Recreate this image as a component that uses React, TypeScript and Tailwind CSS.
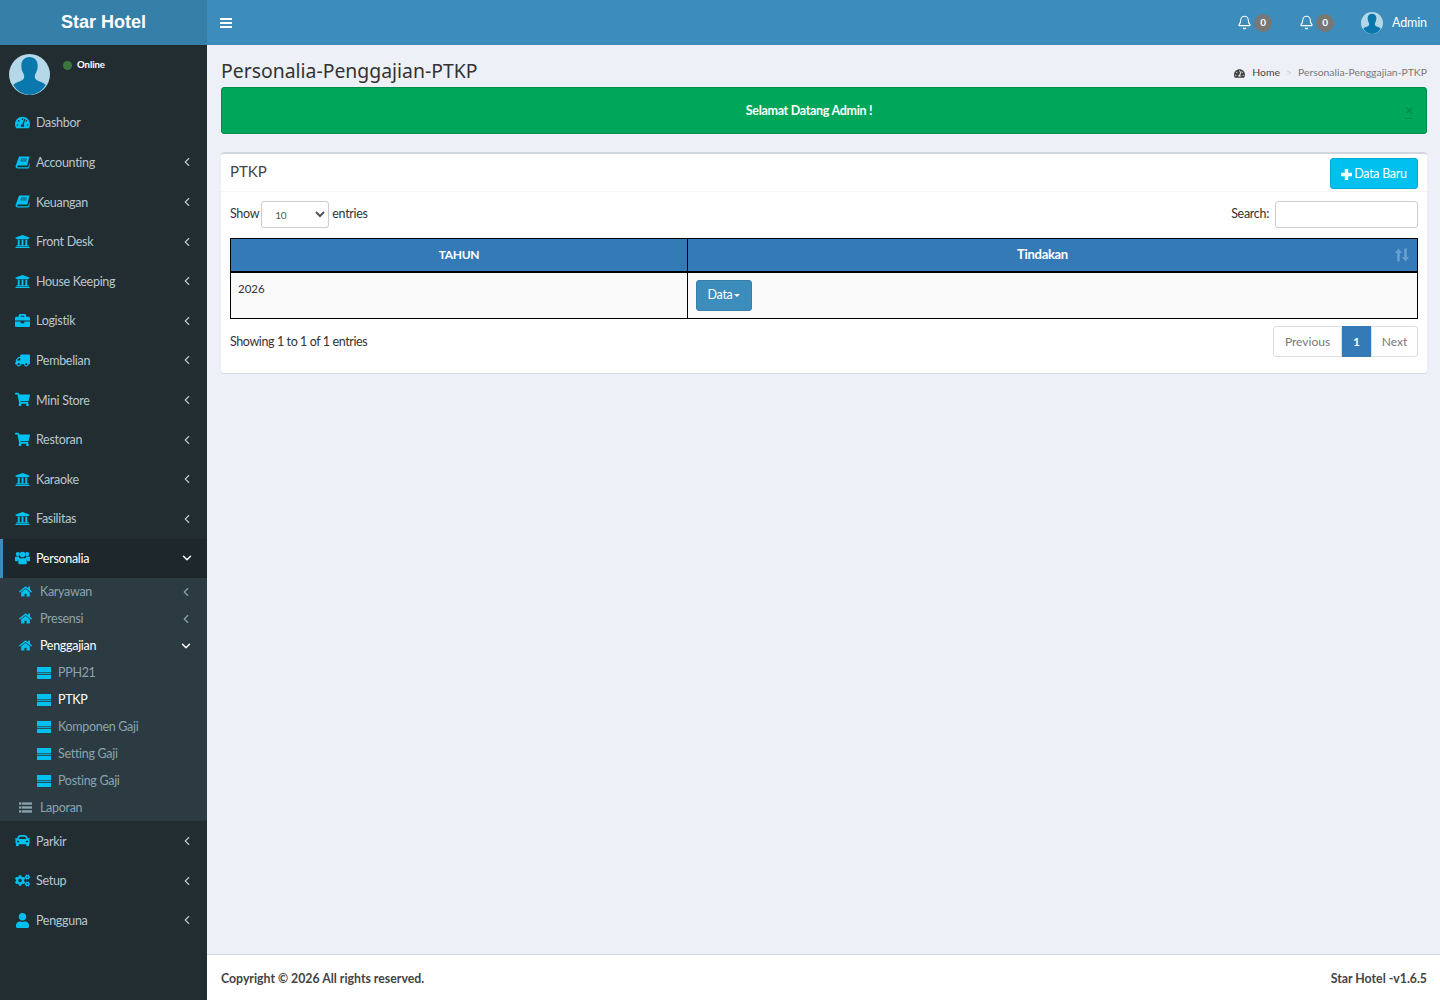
import React from 'react';
import {
  FaTachometerAlt,
  FaUniversity,
  FaBriefcase,
  FaTruck,
  FaShoppingCart,
  FaHome,
  FaCar,
  FaCogs,
  FaUser,
} from 'react-icons/fa';
import { Bell, ChevronDown, ChevronLeft } from 'lucide-react';

type IconProps = { className?: string };

const Avatar = ({ className }: { className: string }) => (
  <svg viewBox="0 0 40 40" className={className}>
    <circle cx="20" cy="20" r="20" fill="#b4d8e8" />
    <path
      d="M20 3c-5 0-8 3.400-8 8.500 0 3 .8 5.500 2 7.500.8 1.400 1 3 .6 4.500-.5 1.600-2 2.400-4.600 3.400-2.600 1-4.600 1.900-5.900 3.400A20 20 0 0 0 20 40a20 20 0 0 0 15.900-9.700c-1.300-1.500-3.300-2.400-5.900-3.400-2.600-1-4.100-1.800-4.600-3.400-.4-1.500-.2-3.100.6-4.500 1.200-2 2-4.500 2-7.500C28 6.400 25 3 20 3z"
      fill="#0b78ad"
    />
  </svg>
);

const SortIcon = () => (
  <svg viewBox="0 0 14 14" className="h-[14px] w-[14px]" fill="#6a9fd0">
    <path d="M3.500 0.500 0 5h2.200v8.500h2.600V5H7z" />
    <path d="M10.500 13.500 14 9h-2.200V0.500H9.200V9H7z" />
  </svg>
);

const BookIcon = ({ className }: IconProps) => (
  <svg viewBox="0 0 16 14" className={className} fill="currentColor">
    <path d="M4.300 0.500H15.500L13 10.300H3.600C2.900 10.300 2.500 10.600 2.400 11.200 2.300 11.800 2.800 12.100 3.400 12.100H14.100L15.500 7V11.300L14.400 13.500H3C1.400 13.500 .4 12.400 .6 10.800z" />
    <path d="M6.300 3.300h6.400M5.700 5.300h6.400" stroke="#222d32" strokeWidth="0.8" />
  </svg>
);

const UsersIcon = ({ className }: IconProps) => (
  <svg viewBox="0 0 16 14" className={className} fill="currentColor">
    <circle cx="3" cy="2.800" r="2.200" />
    <circle cx="13" cy="2.800" r="2.200" />
    <circle cx="8" cy="3.300" r="3" />
    <path d="M0 6.500C0 5.700.6 5.400 1.400 5.400h2.800c.1 1 .5 1.800 1.100 2.400-1.300.5-2.100 1.400-2.400 2.700H1C.4 10.500 0 10.100 0 9.500zM16 6.500c0-.8-.6-1.100-1.400-1.100h-2.800c-.1 1-.5 1.800-1.100 2.400 1.300.5 2.100 1.400 2.400 2.700H15c.6 0 1-.4 1-1z" />
    <path d="M5.500 7.300h5c1.300 0 2 .9 2 2.500v2.500c0 .8-.6 1.300-1.400 1.300H4.900c-.8 0-1.400-.5-1.400-1.300V9.800c0-1.600.7-2.500 2-2.500z" />
  </svg>
);

const ListIcon = ({ className }: IconProps) => (
  <svg viewBox="0 0 14 12" className={className} fill="currentColor">
    <rect x="0" y="0.500" width="2.500" height="2.500" />
    <rect x="3.200" y="0.500" width="10.800" height="2.500" />
    <rect x="0" y="4.750" width="2.500" height="2.500" />
    <rect x="3.200" y="4.750" width="10.800" height="2.500" />
    <rect x="0" y="9" width="2.500" height="2.500" />
    <rect x="3.200" y="9" width="10.800" height="2.500" />
  </svg>
);

const DriveIcon = ({ className }: IconProps) => (
  <svg viewBox="0 0 14 12" className={className} fill="currentColor">
    <rect x="0" y="0" width="14" height="5" />
    <rect x="0" y="6" width="14" height="1.200" opacity="0.8" />
    <rect x="0" y="8" width="14" height="4" />
    <rect x="0" y="5" width="14" height="1" opacity="0.35" />
  </svg>
);

const PlusIcon = ({ className }: IconProps) => (
  <svg viewBox="0 0 11 11" className={className} fill="currentColor">
    <rect x="3.800" y="0" width="3.400" height="11" rx="0.500" />
    <rect x="0" y="3.800" width="11" height="3.400" rx="0.500" />
  </svg>
);

const BarsIcon = () => (
  <svg viewBox="0 0 12 10" className="h-[10px] w-[12px]" fill="currentColor">
    <rect y="0" width="12" height="2" />
    <rect y="4" width="12" height="2" />
    <rect y="8" width="12" height="2" />
  </svg>
);

const TruckIcon = ({ className }: IconProps) => <FaTruck className={`${className} -scale-x-100`} />;

type TopItem = { title: string; icon: React.ComponentType<IconProps>; arrow?: boolean };

const topItems: TopItem[] = [
  { title: 'Dashbor', icon: FaTachometerAlt },
  { title: 'Accounting', icon: BookIcon, arrow: true },
  { title: 'Keuangan', icon: BookIcon, arrow: true },
  { title: 'Front Desk', icon: FaUniversity, arrow: true },
  { title: 'House Keeping', icon: FaUniversity, arrow: true },
  { title: 'Logistik', icon: FaBriefcase, arrow: true },
  { title: 'Pembelian', icon: TruckIcon, arrow: true },
  { title: 'Mini Store', icon: FaShoppingCart, arrow: true },
  { title: 'Restoran', icon: FaShoppingCart, arrow: true },
  { title: 'Karaoke', icon: FaUniversity, arrow: true },
  { title: 'Fasilitas', icon: FaUniversity, arrow: true },
];

const bottomItems: TopItem[] = [
  { title: 'Parkir', icon: FaCar, arrow: true },
  { title: 'Setup', icon: FaCogs, arrow: true },
  { title: 'Pengguna', icon: FaUser, arrow: true },
];

const penggajian = ['PPH21', 'PTKP', 'Komponen Gaji', 'Setting Gaji', 'Posting Gaji'];

const MenuRow = ({ item }: { item: TopItem }) => (
  <div className="flex h-[39.6px] items-center pl-[15px] pr-[13.500px] text-[#b8c7ce]">
    <item.icon className="h-[15px] w-[15px] shrink-0 text-[#00c0ef]" />
    <span className="ml-[6px] translate-y-[0.5px]">{item.title}</span>
    {item.arrow && <ChevronLeft className="ml-auto h-[14px] w-[14px]" strokeWidth={2} />}
  </div>
);

const SubRow = ({ title, open, arrow, icon: Icon = FaHome, iconClass = 'text-[#00c0ef]' }: {
  title: string;
  open?: boolean;
  arrow?: boolean;
  icon?: React.ComponentType<IconProps>;
  iconClass?: string;
}) => (
  <div className={`flex h-[27px] items-center pl-[19px] pr-[14px] ${open ? 'text-white' : 'text-[#8aa4af]'}`}>
    <Icon className={`h-[13px] w-[13px] shrink-0 ${iconClass}`} />
    <span className="ml-[8px] translate-y-[0.5px]">{title}</span>
    {arrow && !open && <ChevronLeft className="ml-auto h-[14px] w-[14px]" strokeWidth={2} />}
    {open && <ChevronDown className="ml-auto h-[14px] w-[14px]" strokeWidth={2.5} />}
  </div>
);

const Sidebar = () => (
  <aside className="flex w-[207px] shrink-0 flex-col bg-[#222d32]">
    <div className="flex h-[45px] items-center justify-center bg-[#367fa9] text-[18px] font-bold tracking-normal text-white [font-family:'Liberation_Sans',sans-serif]">
      Star Hotel
    </div>

    {/* User panel */}
    <div className="flex h-[58px] pl-[9px] pt-[9px]">
      <Avatar className="h-[41px] w-[41px]" />
      <div className="ml-[13px] mt-[6px] flex h-[10px] items-center text-[9.6px] font-bold tracking-[-0.1px] text-white">
        <span className="h-[9px] w-[9px] rounded-full bg-[#3c763d]" />
        <span className="ml-[5px]">Online</span>
      </div>
    </div>

    <nav>
      {topItems.map((item) => (
        <MenuRow key={item.title} item={item} />
      ))}

      <div className="flex h-[39.6px] items-center border-l-[3px] border-[#3c8dbc] bg-[#1e282c] pl-[12px] pr-[13.500px] text-white">
        <UsersIcon className="h-[14px] w-[15px] shrink-0 text-[#00c0ef]" />
        <span className="ml-[6px] translate-y-[0.5px]">Personalia</span>
        <ChevronDown className="ml-auto h-[14px] w-[14px]" strokeWidth={2.5} />
      </div>

      <div className="bg-[#2c3b41]">
        <SubRow title="Karyawan" arrow />
        <SubRow title="Presensi" arrow />
        <SubRow title="Penggajian" open />
        {penggajian.map((name) => (
          <div
            key={name}
            className={`flex h-[27px] items-center pl-[37px] ${name === 'PTKP' ? 'text-white' : 'text-[#8aa4af]'}`}
          >
            <DriveIcon className="h-[12px] w-[14px] shrink-0 text-[#00c0ef]" />
            <span className="ml-[7px] translate-y-[0.5px]">{name}</span>
          </div>
        ))}
        <SubRow title="Laporan" icon={ListIcon} iconClass="text-[#8aa4af]" />
      </div>

      {bottomItems.map((item) => (
        <MenuRow key={item.title} item={item} />
      ))}
    </nav>
  </aside>
);

const Topbar = () => (
  <header className="flex h-[45px] shrink-0 items-center bg-[#3c8dbc] pl-[13px] pr-[13px] text-white">
    <BarsIcon />
    <div className="ml-auto flex items-center">
      {[0, 1].map((i) => (
        <div key={i} className="mr-[27px] flex items-center">
          <Bell className="h-[15px] w-[15px]" strokeWidth={1.75} />
          <span className="ml-[2px] flex h-[18px] w-[18px] items-center justify-center rounded-full bg-[#777] text-[10px] font-bold">
            0
          </span>
        </div>
      ))}
      <Avatar className="h-[22px] w-[22px]" />
      <span className="ml-[9px] translate-y-[0.5px] tracking-[-0.1px]">Admin</span>
    </div>
  </header>
);

const Content = () => (
  <div className="flex-1 pl-[14px] pr-[13px]">
    <div className="flex h-[42px] items-end justify-between pb-[4px]">
      <h1 className="text-[19.4px] leading-[24px] tracking-normal text-[#333] [font-family:'Noto_Sans',sans-serif]">
        Personalia-Penggajian-PTKP
      </h1>
      <div className="flex items-center pb-[2px] text-[10.4px] tracking-normal text-[#444]">
        <FaTachometerAlt className="h-[11px] w-[11px]" />
        <span className="ml-[7px]">Home</span>
        <span className="mx-[6px] text-[#ccc]">&gt;</span>
        <span className="text-[#777]">Personalia-Penggajian-PTKP</span>
      </div>
    </div>

    <div className="relative flex h-[47px] items-center justify-center rounded-[3px] border border-[#008d4c] bg-[#00a65a] pr-[30px] pt-[1px] font-bold text-white">
      Selamat Datang Admin !
      <span className="absolute right-[13px] top-[14px] border-b border-[#008d4c] text-[14px] leading-[16px] text-[#008d4c]">×</span>
    </div>

    <section className="mt-[18px] h-[221px] rounded-[3px] border-t-[2px] border-[#d2d6de] bg-white pb-[1px] shadow-[0_1px_1px_rgba(0,0,0,0.1)]">
      <div className="flex h-[38px] items-start justify-between border-b border-[#f4f4f4] pl-[9px] pr-[9px]">
        <h3 className="mt-[7px] text-[15px] leading-[20px] tracking-normal text-[#444]">PTKP</h3>
        <button className="mt-[4px] flex h-[31px] w-[88px] items-center justify-center rounded-[3px] border border-[#00acd6] bg-[#00c0ef] pt-[1px] text-white">
          <PlusIcon className="mr-[2px] h-[11px] w-[11px]" />
          Data Baru
        </button>
      </div>

      <div className="px-[9px]">
        <div className="mt-[9px] flex h-[27px] items-center text-[#333]">
          <span>Show</span>
          <select
            defaultValue="10"
            className="ml-[2px] h-[27px] w-[68px] rounded-[3px] border border-[#ccc] bg-white pl-[9px] text-[10px] text-[#555]"
          >
            <option value="10">10</option>
          </select>
          <span className="ml-[3px]">entries</span>
          <span className="ml-auto">Search:</span>
          <input className="ml-[6px] h-[27px] w-[143px] rounded-[3px] border border-[#ccc] bg-white" />
        </div>

        <table className="mt-[10px] w-full table-fixed border-collapse">
          <thead>
            <tr className="h-[33px] bg-[#337ab7] text-[12px] font-bold text-white">
              <th className="w-[457px] border border-b-2 border-black text-center">TAHUN</th>
              <th className="relative border border-b-2 border-black pr-[20px] text-center text-[13px]">
                Tindakan
                <span className="absolute right-[8px] top-[9px]">
                  <SortIcon />
                </span>
              </th>
            </tr>
          </thead>
          <tbody>
            <tr className="h-[47px] bg-[#f9f9f9] text-[#333]">
              <td className="border border-black pl-[7px] pt-[7px] align-top text-[11.5px] leading-[17px] tracking-normal">2026</td>
              <td className="border border-black pl-[8px] pt-[7px] align-top">
                <button className="flex h-[31px] w-[56px] items-center justify-center rounded-[3px] border border-[#367fa9] bg-[#3c8dbc] pt-[1px] text-white">
                  Data
                  <span className="ml-[2px] border-x-[3px] border-t-[3px] border-x-transparent border-t-white" />
                </button>
              </td>
            </tr>
          </tbody>
        </table>

        <div className="mt-[7px] flex items-start justify-between text-[#333]">
          <span className="mt-[7px] tracking-[-0.4px]">Showing 1 to 1 of 1 entries</span>
          <div className="flex h-[31px] text-[12px] tracking-normal">
            <span className="flex w-[69px] items-center justify-center rounded-l-[3px] border border-[#ddd] text-[#777]">Previous</span>
            <span className="flex w-[29px] items-center justify-center bg-[#337ab7] font-bold text-white">1</span>
            <span className="flex w-[47px] items-center justify-center rounded-r-[3px] border border-[#ddd] text-[#777]">Next</span>
          </div>
        </div>
      </div>
    </section>
  </div>
);

const Footer = () => (
  <footer className="flex h-[46px] shrink-0 items-center justify-between border-t border-[#d2d6de] bg-white pl-[14px] pr-[13px] pt-[3px] text-[12.3px] font-bold tracking-normal text-[#444]">
    <span>Copyright © 2026 All rights reserved.</span>
    <span>Star Hotel -v1.6.5</span>
  </footer>
);

export default function App() {
  return (
    <div className="flex h-[1000px] overflow-hidden bg-[#edf1f7] text-[12.5px] tracking-[-0.3px] [font-family:Lato,'Noto_Sans',sans-serif]">
      <Sidebar />
      <main className="flex min-w-0 flex-1 flex-col">
        <Topbar />
        <Content />
        <Footer />
      </main>
    </div>
  );
}
